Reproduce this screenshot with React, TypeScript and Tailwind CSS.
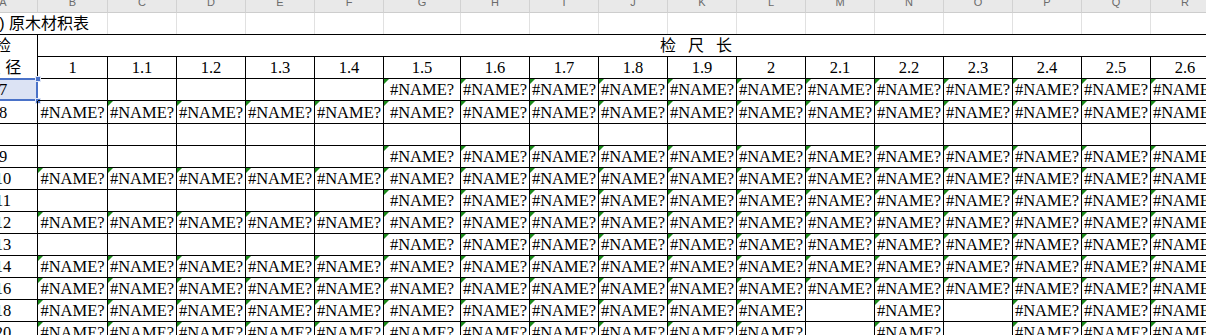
import React from "react";

const COLS = ["A", "B", "C", "D", "E", "F", "G", "H", "I", "J", "K", "L", "M", "N", "O", "P", "Q", "R"];
const LENGTHS = ["1", "1.1", "1.2", "1.3", "1.4", "1.5", "1.6", "1.7", "1.8", "1.9", "2", "2.1", "2.2", "2.3", "2.4", "2.5", "2.6"];

type Pattern = "all" | "half" | "sparse" | "none";

const ROWS: { label: string; pattern: Pattern }[] = [
  { label: "7", pattern: "half" },
  { label: "8", pattern: "all" },
  { label: "", pattern: "none" },
  { label: "9", pattern: "half" },
  { label: "10", pattern: "all" },
  { label: "11", pattern: "half" },
  { label: "12", pattern: "all" },
  { label: "13", pattern: "half" },
  { label: "14", pattern: "all" },
  { label: "16", pattern: "all" },
  { label: "18", pattern: "sparse" },
  { label: "20", pattern: "sparse" },
];

const GRID = "grid grid-cols-[69px_70px_repeat(4,69px)_77px_repeat(11,69px)] -ml-[31px] w-max";
const SERIF = "font-['Liberation_Serif',serif] text-[16.5px] text-black";
const CJK = "font-['Liberation_Sans','Noto_Sans_CJK_SC',sans-serif] text-[16px] text-black";

function filled(pattern: Pattern, col: number) {
  // col: 0 = B ... 16 = R
  if (pattern === "all") return true;
  if (pattern === "half") return col >= 5;
  if (pattern === "sparse") return col !== 11 && col !== 13;
  return false;
}

function Cell({ text, flag }: { text?: string; flag?: boolean }) {
  return (
    <div className={`relative flex items-center justify-center overflow-hidden whitespace-nowrap border-r border-b border-black leading-[21px] ${SERIF}`}>
      {flag && (
        <span className="absolute left-0 top-0 h-0 w-0 border-t-[5px] border-r-[5px] border-t-[#1b8a1b] border-r-transparent" />
      )}
      {text}
    </div>
  );
}

export default function App() {
  return (
    <div className="w-[1206px] h-[335px] overflow-hidden bg-white">
      {/* column letters */}
      <div className={GRID}>
        {COLS.map((c) => (
          <div
            key={c}
            className="h-[13px] overflow-hidden bg-[#e9e9e9] border-r border-b border-r-[#d2d2d2] border-b-[#cdcdcd] text-center font-['Liberation_Sans',sans-serif] text-[11px] leading-[11px] text-[#6b6b6b]"
          >
            <span className="block -mt-[3px]">{c}</span>
          </div>
        ))}
      </div>

      {/* title row */}
      <div className={GRID}>
        <div className={`relative z-10 h-[21px] whitespace-nowrap pl-[16px] leading-[21px] ${CJK}`}>
          (1) 原木材积表
        </div>
        {COLS.slice(1).map((c) => (
          <div key={c} className="h-[21px] border-r border-[#e1e1e1]" />
        ))}
      </div>

      {/* table */}
      <div className={`${GRID} grid-rows-[22px_22px_22px_23px_repeat(10,22px)] border-t border-black`}>
        <div className={`row-span-2 flex flex-col border-r border-b border-black text-center ${CJK}`}>
          <div className="h-[22px] leading-[22px]">检</div>
          <div className="h-[21px] leading-[21px]">尺 径</div>
        </div>
        <div className={`col-span-17 flex items-center gap-[12px] border-r border-b border-black pl-[622px] ${CJK}`}>
          <span>检</span>
          <span>尺</span>
          <span>长</span>
        </div>
        {LENGTHS.map((n) => (
          <Cell key={n} text={n} />
        ))}

        {ROWS.map((row, ri) => (
          <React.Fragment key={ri}>
            {ri === 0 ? (
              <div className={`relative flex items-center justify-center border-r border-b border-black bg-[#dce3f4] leading-[21px] ${SERIF}`}>
                {row.label}
                <span className="absolute -top-px -bottom-px left-0 -right-px border-2 border-[#4a72c8]" />
                <span className="absolute -top-[3px] -right-[4px] h-[6px] w-[6px] bg-[#4a72c8] border border-[#dfe6f7]" />
                <span className="absolute -bottom-[4px] -right-[4px] h-[6px] w-[6px] bg-[#4a72c8] border border-[#dfe6f7]" />
              </div>
            ) : (
              <Cell text={row.label} />
            )}
            {LENGTHS.map((_, ci) => {
              const has = filled(row.pattern, ci);
              return <Cell key={ci} text={has ? "#NAME?" : ""} flag={has && !(row.label === "8" && ci === 0)} />;
            })}
          </React.Fragment>
        ))}
      </div>
    </div>
  );
}
